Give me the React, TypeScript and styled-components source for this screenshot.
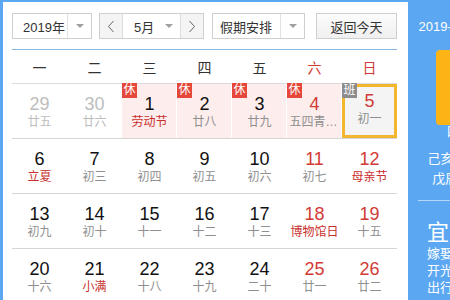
import React from 'react';
import styled, { createGlobalStyle } from 'styled-components';

const BLUE = '#5ba7f2';
const RED = '#d23a36';

const GlobalStyle = createGlobalStyle`
  body {
    margin: 0;
    font-family: "Liberation Sans", Arial, "Noto Sans CJK SC", sans-serif;
    background: #fff;
  }
`;

interface Day {
  num: number;
  lunar: string;
  other?: boolean;
  weekend?: boolean;
  fest?: boolean;
  badge?: 'rest' | 'work';
  today?: boolean;
}

const weeks: Day[][] = [
  [
    { num: 29, lunar: '廿五', other: true },
    { num: 30, lunar: '廿六', other: true },
    { num: 1, lunar: '劳动节', fest: true, badge: 'rest' },
    { num: 2, lunar: '廿八', badge: 'rest' },
    { num: 3, lunar: '廿九', badge: 'rest' },
    { num: 4, lunar: '五四青年节', weekend: true, badge: 'rest' },
    { num: 5, lunar: '初一', weekend: true, badge: 'work', today: true },
  ],
  [
    { num: 6, lunar: '立夏', fest: true },
    { num: 7, lunar: '初三' },
    { num: 8, lunar: '初四' },
    { num: 9, lunar: '初五' },
    { num: 10, lunar: '初六' },
    { num: 11, lunar: '初七', weekend: true },
    { num: 12, lunar: '母亲节', weekend: true, fest: true },
  ],
  [
    { num: 13, lunar: '初九' },
    { num: 14, lunar: '初十' },
    { num: 15, lunar: '十一' },
    { num: 16, lunar: '十二' },
    { num: 17, lunar: '十三' },
    { num: 18, lunar: '博物馆日', weekend: true, fest: true },
    { num: 19, lunar: '十五', weekend: true },
  ],
  [
    { num: 20, lunar: '十六' },
    { num: 21, lunar: '小满', fest: true },
    { num: 22, lunar: '十八' },
    { num: 23, lunar: '十九' },
    { num: 24, lunar: '二十' },
    { num: 25, lunar: '廿一', weekend: true },
    { num: 26, lunar: '廿二', weekend: true },
  ],
];

const weekdays = ['一', '二', '三', '四', '五', '六', '日'];

const Widget = styled.div`
  display: flex;
  width: 450px;
  height: 300px;
  box-sizing: border-box;
  border-top: 2px solid ${BLUE};
  border-left: 3px solid ${BLUE};
  overflow: hidden;
`;

const Main = styled.div`
  flex-shrink: 0;
  width: 405px;
  box-sizing: border-box;
  padding: 11px 11px 0 9px;
  background: #fff;
`;

const Toolbar = styled.div`
  display: flex;
  align-items: center;
  padding-bottom: 10px;
  border-bottom: 1px solid #86b6e2;
`;

const Select = styled.div<{ $w: number; $gap: number }>`
  display: flex;
  width: ${p => p.$w}px;
  height: 26px;
  margin-right: ${p => p.$gap}px;
  box-sizing: border-box;
  border: 1px solid #cfcfcf;
  background: #fff;
  font-size: 13px;
  color: #333;
`;

const SelectLabel = styled.div<{ $pad: number }>`
  flex: 1;
  display: flex;
  align-items: center;
  padding-left: ${p => p.$pad}px;
`;

const ArrowBox = styled.div<{ $divider?: boolean }>`
  width: 23px;
  display: flex;
  align-items: center;
  justify-content: center;
  border-left: ${p => (p.$divider ? '1px solid #e2e2e2' : 'none')};
`;

const Caret = styled.span`
  width: 0;
  height: 0;
  border-left: 4px solid transparent;
  border-right: 4px solid transparent;
  border-top: 4px solid #a0a0a0;
`;

const StepBtn = styled.div<{ $side: 'left' | 'right' }>`
  width: 22px;
  display: flex;
  align-items: center;
  justify-content: center;
  background: #f4f4f4;
  border-${p => (p.$side === 'left' ? 'right' : 'left')}: 1px solid #dcdcdc;
`;

const TodayBtn = styled.div`
  width: 81px;
  height: 26px;
  box-sizing: border-box;
  border: 1px solid #cfcfcf;
  background: linear-gradient(#fcfcfc, #f0f0f0);
  display: flex;
  align-items: center;
  justify-content: center;
  font-size: 13px;
  color: #333;
`;

const Grid = styled.div`
  display: grid;
  grid-template-columns: repeat(7, 55px);
`;

const HeadCell = styled.div<{ $weekend: boolean }>`
  height: 33px;
  display: flex;
  align-items: center;
  justify-content: center;
  font-size: 14px;
  color: ${p => (p.$weekend ? RED : '#333')};
  border-bottom: 1px solid #dcdcdc;
`;

const Cell = styled.div<{ $rest: boolean; $today: boolean }>`
  position: relative;
  height: 55px;
  box-sizing: border-box;
  border-bottom: 1px solid #d6d6d6;
  padding-top: ${p => (p.$today ? 7 : 10)}px;
  display: flex;
  flex-direction: column;
  align-items: center;
  background: ${p => (p.$rest ? '#fdeded' : '#fff')};
  box-shadow: ${p => (p.$today ? 'inset 0 0 0 3px #f3b72f' : p.$rest ? 'inset -1px 0 0 #fff' : 'none')};
  ${p => p.$today && 'background: #f4f4f4;'}
`;

const Num = styled.div<{ $color: string }>`
  font-size: 18px;
  line-height: 20px;
  color: ${p => p.$color};
`;

const Lunar = styled.div<{ $color: string }>`
  max-width: 50px;
  font-size: 12px;
  line-height: 16px;
  color: ${p => p.$color};
  white-space: nowrap;
  overflow: hidden;
  text-overflow: ellipsis;
`;

const Badge = styled.span<{ $work: boolean }>`
  position: absolute;
  top: -1px;
  left: 0;
  width: 15px;
  height: 15px;
  line-height: 15px;
  text-align: center;
  font-size: 12px;
  color: #fff;
  background: ${p => (p.$work ? '#8c8c8c' : '#e5473b')};
`;

const Side = styled.div`
  flex-shrink: 0;
  width: 130px;
  background: ${BLUE};
  color: #fff;
  text-align: center;
`;

const SideDate = styled.div`
  margin-top: 17px;
  font-size: 13px;
  line-height: 16px;
`;

const DayBox = styled.div`
  width: 74px;
  height: 75px;
  margin: 15px auto 0;
  border-radius: 4px;
  background: #fbb316;
  display: flex;
  align-items: center;
  justify-content: center;
  font-size: 44px;
`;

const SideLine = styled.div<{ $top: number; $lh: number }>`
  margin-top: ${p => p.$top}px;
  font-size: 13px;
  line-height: ${p => p.$lh}px;
`;

const Divider = styled.div`
  height: 1px;
  margin: 11px 10px 0;
  background: rgba(255, 255, 255, 0.55);
`;

const Advice = styled.div`
  display: flex;
  margin-top: 20px;
  padding-left: 19px;
  text-align: left;
  gap: 22px;
`;

const AdviceCol = styled.div`
  display: flex;
  flex-direction: column;
`;

const AdviceTitle = styled.div`
  font-size: 22px;
  line-height: 24px;
`;

const AdviceItem = styled.div`
  font-size: 13px;
  line-height: 17px;
`;

const Chevron = ({ dir }: { dir: 'left' | 'right' }) => (
  <svg width="8" height="13" viewBox="0 0 8 13">
    <polyline
      points={dir === 'left' ? '6.5,1 1.5,6.5 6.5,12' : '1.5,1 6.5,6.5 1.5,12'}
      fill="none"
      stroke="#666"
      strokeWidth="1"
    />
  </svg>
);

const numColor = (d: Day) => (d.other ? '#bdbdbd' : d.weekend ? RED : '#111');
const lunarColor = (d: Day) => (d.other ? '#bdbdbd' : d.fest ? '#c9302c' : '#8f8f8f');

export default function App() {
  return (
    <>
      <GlobalStyle />
      <Widget>
        <Main>
          <Toolbar>
            <Select $w={80} $gap={7}>
              <SelectLabel $pad={10}>2019年</SelectLabel>
              <ArrowBox $divider><Caret /></ArrowBox>
            </Select>
            <Select $w={105} $gap={8}>
              <StepBtn $side="left"><Chevron dir="left" /></StepBtn>
              <SelectLabel $pad={11}>5月</SelectLabel>
              <ArrowBox><Caret /></ArrowBox>
              <StepBtn $side="right"><Chevron dir="right" /></StepBtn>
            </Select>
            <Select $w={93} $gap={11}>
              <SelectLabel $pad={7}>假期安排</SelectLabel>
              <ArrowBox $divider><Caret /></ArrowBox>
            </Select>
            <TodayBtn>返回今天</TodayBtn>
          </Toolbar>
          <Grid>
            {weekdays.map((w, i) => (
              <HeadCell key={w} $weekend={i >= 5}>{w}</HeadCell>
            ))}
            {weeks.flat().map((d, i) => (
              <Cell key={i} $rest={d.badge === 'rest'} $today={!!d.today}>
                {d.badge && <Badge $work={d.badge === 'work'}>{d.badge === 'work' ? '班' : '休'}</Badge>}
                <Num $color={numColor(d)}>{d.num}</Num>
                <Lunar $color={lunarColor(d)}>{d.lunar}</Lunar>
              </Cell>
            ))}
          </Grid>
        </Main>
        <Side>
          <SideDate>2019-05-05 星期日</SideDate>
          <DayBox>5</DayBox>
          <SideLine $top={0} $lh={14}>四月初一</SideLine>
          <SideLine $top={10} $lh={20}>己亥年【猪年】</SideLine>
          <SideLine $top={0} $lh={20}>戊辰月 癸卯日</SideLine>
          <Divider />
          <Advice>
            <AdviceCol>
              <AdviceTitle>宜</AdviceTitle>
              <AdviceItem>嫁娶</AdviceItem>
              <AdviceItem>开光</AdviceItem>
              <AdviceItem>出行</AdviceItem>
            </AdviceCol>
            <AdviceCol>
              <AdviceTitle>忌</AdviceTitle>
              <AdviceItem>动土</AdviceItem>
              <AdviceItem>破土</AdviceItem>
              <AdviceItem>安葬</AdviceItem>
            </AdviceCol>
          </Advice>
        </Side>
      </Widget>
    </>
  );
}
